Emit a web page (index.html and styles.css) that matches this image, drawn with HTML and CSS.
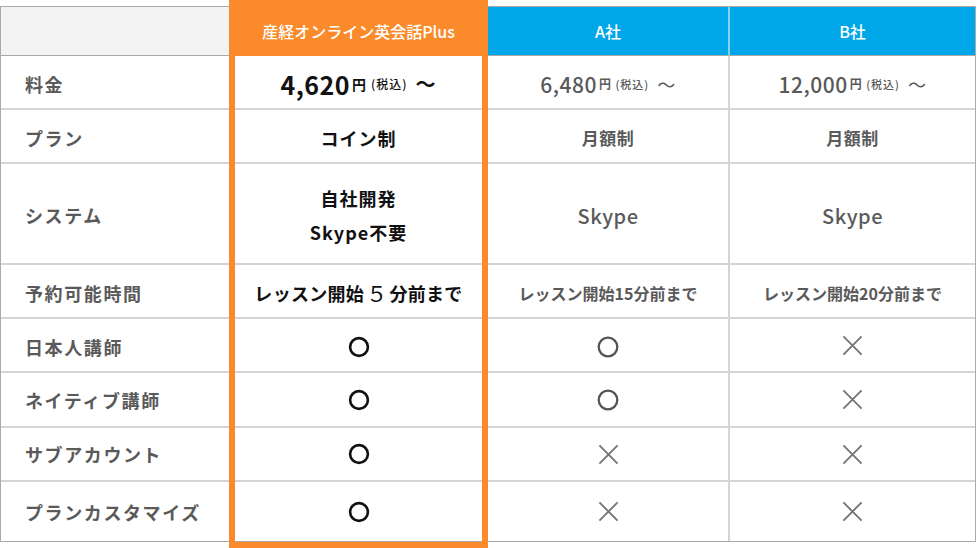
FILE: index.html
```html
<!DOCTYPE html>
<html lang="ja">
<head>
    <meta charset="UTF-8">
    <meta name="viewport" content="width=device-width, initial-scale=1.0">
    <title>オンライン英会話 比較表</title>
    <link rel="stylesheet" href="styles.css">
</head>
<body>

    <div class="wrap">
        <div class="compare">
            <!-- header -->
            <div class="cell head head-blank"></div>
            <div class="cell head head-ours">産経オンライン英会話Plus</div>
            <div class="cell head head-other col-a">A社</div>
            <div class="cell head head-other">B社</div>

            <!-- 料金 -->
            <div class="cell label shift">料金</div>
            <div class="cell ours shift">
                <span class="num">4,620</span><span class="yen">円</span><span class="tax">(税込)</span><span class="tilde">～</span>
            </div>
            <div class="cell other col-a shift">
                <span class="num">6,480</span><span class="yen">円</span><span class="tax">(税込)</span><span class="tilde">～</span>
            </div>
            <div class="cell other shift">
                <span class="num">12,000</span><span class="yen">円</span><span class="tax">(税込)</span><span class="tilde">～</span>
            </div>

            <!-- プラン -->
            <div class="cell label shift">プラン</div>
            <div class="cell ours shift">コイン制</div>
            <div class="cell other col-a shift">月額制</div>
            <div class="cell other shift">月額制</div>

            <!-- システム -->
            <div class="cell label shift">システム</div>
            <div class="cell ours two-line shift">自社開発<br>Skype不要</div>
            <div class="cell other col-a latin shift">Skype</div>
            <div class="cell other latin shift">Skype</div>

            <!-- 予約可能時間 -->
            <div class="cell label shift">予約可能時間</div>
            <div class="cell ours time shift">レッスン開始<span class="five">５</span>分前まで</div>
            <div class="cell other col-a small shift">レッスン開始15分前まで</div>
            <div class="cell other small shift">レッスン開始20分前まで</div>

            <!-- 日本人講師 -->
            <div class="cell label shift">日本人講師</div>
            <div class="cell ours shift">
                <svg class="mark" width="22" height="22" viewBox="0 0 22 22"><circle cx="11" cy="11" r="8.9" fill="none" stroke="currentColor" stroke-width="2.6"/></svg>
            </div>
            <div class="cell other col-a shift">
                <svg class="mark circle-gray" width="22" height="22" viewBox="0 0 22 22"><circle cx="11" cy="11" r="9.3" fill="none" stroke="currentColor" stroke-width="2.3"/></svg>
            </div>
            <div class="cell other">
                <svg class="mark cross" width="22" height="22" viewBox="0 0 22 22"><path d="M1.5 1.5 L20.5 20.5 M20.5 1.5 L1.5 20.5" stroke="currentColor" stroke-width="2" fill="none"/></svg>
            </div>

            <!-- ネイティブ講師 -->
            <div class="cell label">ネイティブ講師</div>
            <div class="cell ours">
                <svg class="mark" width="22" height="22" viewBox="0 0 22 22"><circle cx="11" cy="11" r="8.9" fill="none" stroke="currentColor" stroke-width="2.6"/></svg>
            </div>
            <div class="cell other col-a">
                <svg class="mark circle-gray" width="22" height="22" viewBox="0 0 22 22"><circle cx="11" cy="11" r="9.3" fill="none" stroke="currentColor" stroke-width="2.3"/></svg>
            </div>
            <div class="cell other">
                <svg class="mark cross" width="22" height="22" viewBox="0 0 22 22"><path d="M1.5 1.5 L20.5 20.5 M20.5 1.5 L1.5 20.5" stroke="currentColor" stroke-width="2" fill="none"/></svg>
            </div>

            <!-- サブアカウント -->
            <div class="cell label">サブアカウント</div>
            <div class="cell ours">
                <svg class="mark" width="22" height="22" viewBox="0 0 22 22"><circle cx="11" cy="11" r="8.9" fill="none" stroke="currentColor" stroke-width="2.6"/></svg>
            </div>
            <div class="cell other col-a">
                <svg class="mark cross" width="22" height="22" viewBox="0 0 22 22"><path d="M1.5 1.5 L20.5 20.5 M20.5 1.5 L1.5 20.5" stroke="currentColor" stroke-width="2" fill="none"/></svg>
            </div>
            <div class="cell other">
                <svg class="mark cross" width="22" height="22" viewBox="0 0 22 22"><path d="M1.5 1.5 L20.5 20.5 M20.5 1.5 L1.5 20.5" stroke="currentColor" stroke-width="2" fill="none"/></svg>
            </div>

            <!-- プランカスタマイズ -->
            <div class="cell label last">プランカスタマイズ</div>
            <div class="cell ours last">
                <svg class="mark" width="22" height="22" viewBox="0 0 22 22"><circle cx="11" cy="11" r="8.9" fill="none" stroke="currentColor" stroke-width="2.6"/></svg>
            </div>
            <div class="cell other col-a last">
                <svg class="mark cross" width="22" height="22" viewBox="0 0 22 22"><path d="M1.5 1.5 L20.5 20.5 M20.5 1.5 L1.5 20.5" stroke="currentColor" stroke-width="2" fill="none"/></svg>
            </div>
            <div class="cell other last">
                <svg class="mark cross" width="22" height="22" viewBox="0 0 22 22"><path d="M1.5 1.5 L20.5 20.5 M20.5 1.5 L1.5 20.5" stroke="currentColor" stroke-width="2" fill="none"/></svg>
            </div>
        </div>

        <!-- orange frame around our column -->
        <div class="highlight"></div>
    </div>

</body>
</html>
```

FILE: styles.css
```css
body {
    margin: 0;
    font-family: "Noto Sans CJK JP", "Noto Sans", sans-serif;
    background: #fff;
}
.wrap {
    position: relative;
    box-sizing: border-box;
    width: 977px;
    height: 548px;
    padding-top: 6px;
}
.compare {
    display: grid;
    grid-template-columns: 228px 259px 242px 245px;
    grid-template-rows: 49px 54px 54px 101px 54px 54px 55px 54px 59px;
    box-sizing: border-box;
    width: 976px;
    border: 1px solid #aaa;
}
.cell {
    box-sizing: border-box;
    display: flex;
    align-items: center;
    justify-content: center;
    border-bottom: 2px solid #d4d4d4;
    font-weight: 700;
}
.cell.last {
    border-bottom: none;
}
.shift {
    padding-top: 3px;
}
.col-a {
    border-right: 2px solid #d4d4d4;
}

/* Header */
.head {
    border-bottom: 1px solid #aaa;
    color: #fff;
    font-size: 16px;
    font-weight: 500;
}
.head-blank {
    background: #f3f3f3;
}
.head-ours {
    background: #fa8a2a;
    border-bottom-color: #fa8a2a;
}
.head-other {
    background: #00a7e8;
}
.head-other.col-a {
    border-right-color: #7fd3f3;
}

/* Labels */
.label {
    justify-content: flex-start;
    padding-left: 24px;
    color: #5a5a5a;
    font-size: 18px;
    letter-spacing: 1.6px;
}

/* Our column */
.ours {
    color: #111;
    font-size: 18px;
    letter-spacing: 1px;
}
.ours.time {
    letter-spacing: 0.3px;
}
.two-line {
    flex-direction: column;
    line-height: 34px;
    text-align: center;
}
.five {
    font-size: 21px;
    font-weight: 400;
    margin: 0 2px;
}

/* Other companies */
.other {
    color: #5a5a5a;
    font-size: 17px;
    letter-spacing: 0.5px;
}
.other.small {
    font-size: 16px;
    letter-spacing: 0;
}
.other.latin {
    font-size: 20px;
    font-weight: 500;
}

/* Price */
.num {
    font-size: 25px;
    letter-spacing: 0.5px;
}
.yen {
    font-size: 14px;
    margin-left: 2px;
}
.tax {
    font-size: 12px;
    font-weight: 500;
    margin-left: 4px;
    letter-spacing: 1px;
}
.tilde {
    font-size: 20px;
    margin-left: 8px;
}
.other .num {
    font-size: 21px;
    font-weight: 500;
}
.other .yen {
    font-size: 12px;
}
.other .tax {
    font-size: 11px;
}
.other .tilde {
    font-size: 18px;
    font-weight: 400;
}

/* Marks */
.mark {
    display: block;
    color: #111;
}
.circle-gray {
    color: #555;
}
.cross {
    color: #777;
    width: 21px;
    height: 21px;
}

/* Highlight frame */
.highlight {
    position: absolute;
    left: 229px;
    top: 0;
    width: 259px;
    height: 548px;
    box-sizing: border-box;
    border: 6px solid #fa8a2a;
    border-top-width: 7px;
    pointer-events: none;
}
```
